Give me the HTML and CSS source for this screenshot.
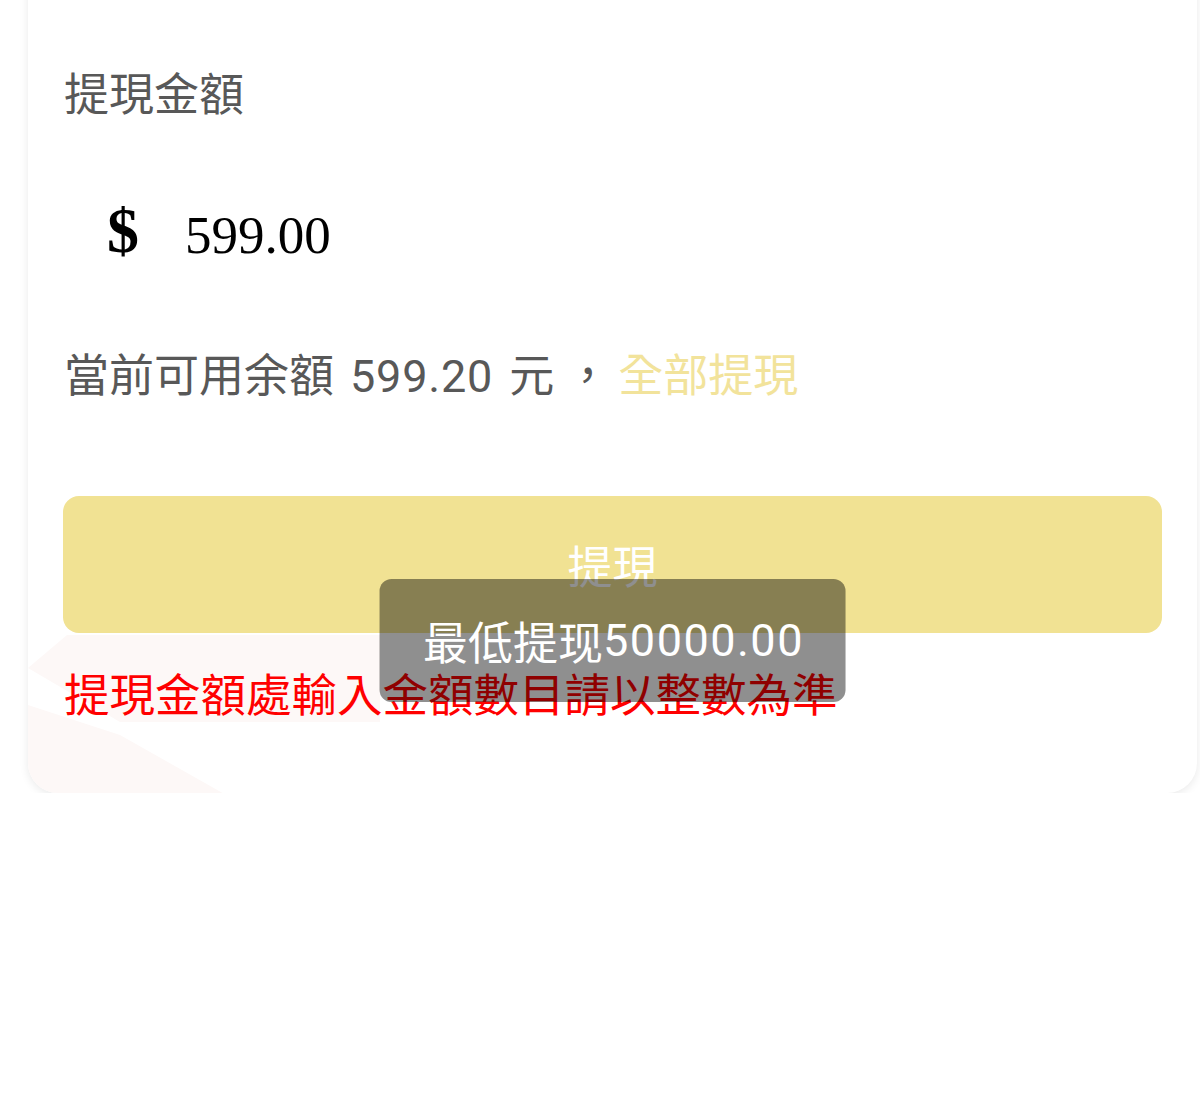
FILE: index.html
```html
<!DOCTYPE html>
<html lang="zh-Hant">
  <head>
    <meta charset="UTF-8" />
    <meta name="viewport" content="width=device-width, initial-scale=1.0" />
    <title>提現</title>
    <link rel="stylesheet" href="styles.css">
  </head>
  <body>
    <div class="card">
      <div class="deco deco-top"></div>
      <div class="deco deco-bottom"></div>

      <h2 class="label">提現金額</h2>

      <div class="amount-row">
        <span class="currency">$</span>
        <input class="amount-input" type="text" value="599.00" />
      </div>

      <p class="balance">
        當前可用余額<span class="num">599.20</span>元 ，<a class="withdraw-all" href="#">全部提現</a>
      </p>

      <button class="submit" type="button">提現</button>

      <p class="notice">提現金額處輸入金額數目請以整數為準</p>

      <div class="toast">最低提现<span class="toast-num">50000.00</span></div>
    </div>
  </body>
</html>
```

FILE: styles.css
```css
body {
  margin: 0;
  background-color: #fff;
  font-family: Roboto, "Noto Sans CJK TC", sans-serif;
}

.card {
  position: relative;
  overflow: hidden;
  margin: -40px 3px 0 28px;
  padding: 100px 35px 64px 35px;
  background-color: #fff;
  border-radius: 0 0 30px 30px;
  box-shadow: 0 2px 10px rgba(0, 0, 0, 0.09);
}

/* faint pink shapes in the lower left corner */
.deco {
  position: absolute;
  left: 0;
  top: 0;
  width: 100%;
  height: 100%;
  background-color: #fdf8f7;
  pointer-events: none;
}
.deco-top {
  clip-path: polygon(0 708px, 39px 675px, 352px 675px, 352px 762px, 92px 762px);
}
.deco-bottom {
  clip-path: polygon(0 745px, 92px 775px, 207px 840px, 0 840px);
}

.label,
.balance,
.notice {
  position: relative;
  margin: 0;
  padding-top: 4px;
  font-size: 45px;
  font-weight: 400;
  line-height: 64px;
}

.label {
  margin-left: 1px;
  color: #585858;
}

.amount-row {
  position: relative;
  display: flex;
  align-items: center;
  height: 100px;
  margin-top: 57px;
}
.currency {
  margin: 0 0 8px 44px;
  width: 78px;
  font-family: "Liberation Serif", serif;
  font-size: 64px;
  font-weight: 700;
  line-height: 1;
  color: #000;
}
.amount-input {
  flex: 1;
  padding: 0;
  border: none;
  outline: none;
  background: transparent;
  font-family: "Liberation Serif", serif;
  font-size: 53px;
  color: #000;
}

.balance {
  margin-top: 56px;
  margin-left: 1px;
  color: #585858;
}
.num {
  margin: 0 16px 0 16px;
  letter-spacing: 0.8px;
}
.withdraw-all {
  margin-left: 8px;
  color: #f2e39b;
  text-decoration: none;
}

.submit {
  position: relative;
  display: block;
  width: 100%;
  height: 137px;
  margin-top: 87px;
  border: none;
  border-radius: 16px;
  background-color: #f1e293;
  color: #fff;
  font-family: "Noto Sans CJK TC", sans-serif;
  font-size: 45px;
}

.notice {
  margin-top: 28px;
  margin-left: 1px;
  font-size: 45.5px;
  color: #ff0000;
}

.toast {
  position: absolute;
  left: 50%;
  top: 619px;
  transform: translateX(-50%);
  display: flex;
  align-items: center;
  height: 123px;
  padding: 0 42px 0 44px;
  box-sizing: border-box;
  border-radius: 12px;
  background-color: rgba(0, 0, 0, 0.44);
  color: #fff;
  font-size: 45px;
  white-space: nowrap;
}
.toast-num {
  letter-spacing: 1.5px;
}
```
